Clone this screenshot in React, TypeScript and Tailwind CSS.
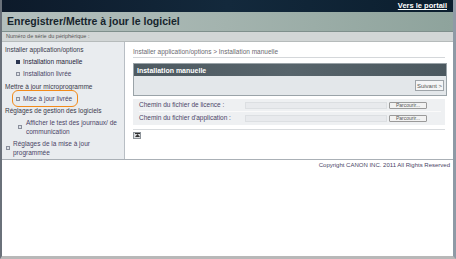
import React from "react";

// élément du menu latéral
function NavItem({
  label,
  active,
  highlight,
}: {
  label: React.ReactNode;
  active?: boolean;
  highlight?: boolean;
}) {
  return (
    <div className="flex items-center pl-[14px]">
      <div
        className={`flex items-center gap-[3px] ${
          highlight ? "outline-[1.5px] outline-solid outline-[#f28a1a] outline-offset-[3px] rounded-[2px] pr-[2px]" : ""
        }`}
      >
        <span
          className={`w-[4px] h-[4px] shrink-0 border ${
            active ? "bg-[#2b3550] border-[#2b3550]" : "bg-[#dde0e6] border-[#8a8f9c]"
          }`}
        />
        <span className={`leading-[9px] ${active ? "text-[#1e2238]" : "text-[#4a4466]"}`}>{label}</span>
      </div>
    </div>
  );
}

export default function App() {
  return (
    <div
      className="w-[456px] h-[259px] bg-white flex flex-col border-l-2 border-l-[#6a717a] border-r-[3px] border-r-[#8e9aa6] border-b-[3px] border-b-[#b8b8b8] overflow-hidden"
      style={{ fontFamily: '"Liberation Sans", Arial, sans-serif' }}
    >
      {/* barre du haut */}
      <div className="h-[12px] bg-gradient-to-r from-[#0d1a2a] via-[#13293c] to-[#0b1e2e] flex items-center justify-end pr-[6px]">
        <span className="text-white text-[7.5px] font-bold underline leading-none">Vers le portail</span>
      </div>

      {/* titre */}
      <div className="h-[20px] bg-gradient-to-r from-[#b3bfbd] via-[#a3b3ae] to-[#8ea39c] flex items-center pl-[5px] border-b border-b-[#7f8f8c]">
        <h1 className="text-[10.5px] font-bold text-[#16242c] leading-none">Enregistrer/Mettre à jour le logiciel</h1>
      </div>

      {/* numéro de série */}
      <div className="h-[10px] bg-[#d2d6d6] flex items-center pl-[4px] border-b border-b-[#b6bbbb]">
        <span className="text-[5.5px] text-[#555] leading-none">Numéro de série du périphérique :</span>
      </div>

      {/* contenu */}
      <div className="flex h-[118px] border-b border-b-[#aab0b6]">
        {/* menu latéral */}
        <div className="w-[123px] shrink-0 bg-[#e9ecef] border-r border-r-[#b8bec4] text-[6.5px] flex flex-col pt-[3px] gap-[3px] overflow-hidden">
          <div className="pl-[3px] text-[#3a3a4a] leading-[9px]">Installer application/options</div>
          <NavItem label="Installation manuelle" active />
          <NavItem label="Installation livrée" />
          <div className="pl-[3px] text-[#3a3a4a] leading-[9px] pt-[1px]">Mettre à jour microprogramme</div>
          <NavItem label="Mise à jour livrée" highlight />
          <div className="pl-[3px] text-[#3a3a4a] leading-[9px]">Réglages de gestion des logiciels</div>
          <div className="flex items-center pl-[16px] gap-[3px]">
            <span className="w-[4px] h-[4px] shrink-0 border bg-[#dde0e6] border-[#8a8f9c]" />
            <span className="text-[#4a4466] leading-[9px] pl-[1px]">
              Afficher le test des journaux/ de
              <br />
              communication
            </span>
          </div>
          <div className="flex items-center pl-[4px] gap-[3px]">
            <span className="w-[4px] h-[4px] shrink-0 border bg-[#dde0e6] border-[#8a8f9c]" />
            <span className="text-[#4a4466] leading-[9px]">
              Réglages de la mise à jour
              <br />
              programmée
            </span>
          </div>
        </div>

        {/* zone principale */}
        <div className="flex-1 px-[8px] pt-[5px] flex flex-col">
          <div className="text-[6.5px] text-[#6a6a70] leading-[9px] pb-[1px] border-b border-b-[#d4d7da]">
            Installer application/options &gt; Installation manuelle
          </div>

          <div className="mt-[5px] border border-[#9aa3a8] mr-[-2px]">
            <div className="h-[12px] bg-gradient-to-r from-[#4e5a61] via-[#57646b] to-[#4b585f] flex items-center pl-[3px]">
              <span className="text-white text-[7px] font-bold leading-none">Installation manuelle</span>
            </div>
            <div className="h-[19px] bg-[#e3e7ea] flex items-center justify-end pr-[2px]">
              <button className="h-[11px] w-[29px] bg-[#f4f5f6] border border-[#9ea4a9] text-[6px] text-[#555] leading-none">
                Suivant &gt;
              </button>
            </div>
          </div>

          <div className="mt-[3px] bg-[#eef0f2] py-[1px] pl-[6px] pr-[4px] flex flex-col text-[6.5px] text-[#4a4466]">
            <div className="h-[12px] flex items-center border-b border-b-[#fafafa]">
              <span className="w-[106px] leading-none">Chemin du fichier de licence :</span>
              <div className="w-[142px] h-[7px] bg-[#e8eaed] border border-[#dcdfe2]" />
              <button className="ml-[2px] h-[7px] w-[38px] bg-[#f2f2f2] border border-[#9a9a9a] rounded-[1px] text-[5px] text-[#555] leading-none">
                Parcourir...
              </button>
            </div>
            <div className="h-[12px] flex items-center">
              <span className="w-[106px] leading-none">Chemin du fichier d'application :</span>
              <div className="w-[142px] h-[7px] bg-[#e8eaed] border border-[#dcdfe2]" />
              <button className="ml-[2px] h-[7px] w-[38px] bg-[#f2f2f2] border border-[#9a9a9a] rounded-[1px] text-[5px] text-[#555] leading-none">
                Parcourir...
              </button>
            </div>
          </div>

          <div className="mt-[4px] border-t border-t-[#d8dbde] pt-[2px]">
            <div className="w-[8px] h-[7px] bg-[#d9dcdf] border border-[#8d9399] flex items-center justify-center">
              <svg width="5" height="5" viewBox="0 0 5 5">
                <rect x="0" y="0" width="5" height="1" fill="#333" />
                <path d="M2.5 1 L5 4 L0 4 Z" fill="#333" />
              </svg>
            </div>
          </div>
        </div>
      </div>

      {/* pied de page */}
      <div className="flex justify-end pr-[3px] pt-[1px]">
        <span className="text-[6px] text-[#4a4466] leading-[9px]">Copyright CANON INC. 2011 All Rights Reserved</span>
      </div>
    </div>
  );
}
